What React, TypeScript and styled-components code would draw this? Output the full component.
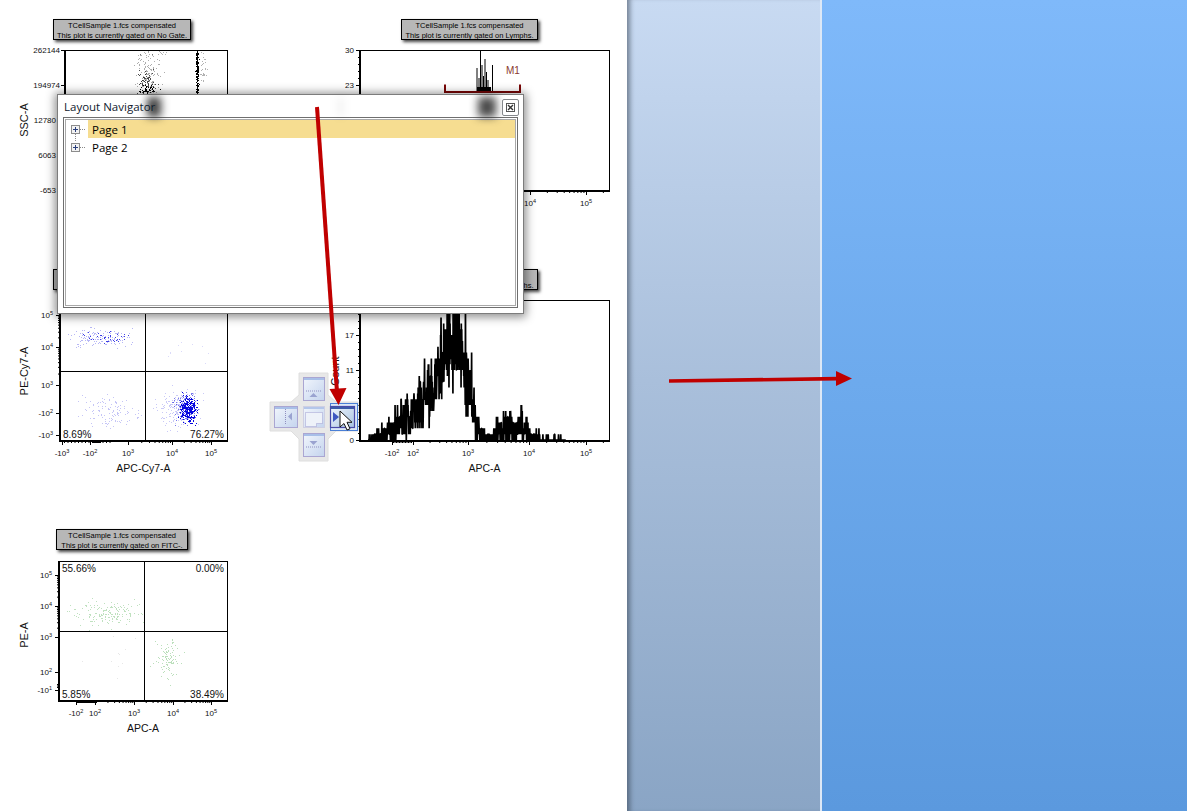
import React from "react";
import styled, { createGlobalStyle } from "styled-components";

const GlobalStyle = createGlobalStyle`
  html, body { margin: 0; padding: 0; background: #fff; }
  #root { width: 1187px; height: 811px; }
`;

const Page = styled.div`
  position: relative;
  display: flex;
  width: 1187px;
  height: 811px;
  overflow: hidden;
  font-family: "Liberation Sans", Arial, sans-serif;
`;
const Canvas = styled.main`
  position: relative;
  flex: 0 0 627px;
  background: #fff;
`;
const MidPanel = styled.aside`
  box-sizing: border-box;
  flex: 0 0 195px;
  background: linear-gradient(180deg, #c8daf2 0%, #a9bfdb 47%, #8aa5c5 100%);
  box-shadow: inset 6px 0 5px -3px rgba(50, 60, 75, 0.55);
  border-right: 2px solid #dde8f6;
`;
const RightPanel = styled.section`
  flex: 1;
  background: linear-gradient(180deg, #7fb9fa 0%, #6daaed 47%, #5b99de 100%);
`;
const PlotNode = styled.figure<{ $x: number; $y: number }>`
  position: absolute;
  left: ${(p) => p.$x}px;
  top: ${(p) => p.$y}px;
  margin: 0;
`;
const PlotTitle = styled.div<{ $offset: number; $w: number }>`
  box-sizing: border-box;
  width: ${(p) => p.$w}px;
  height: 21px;
  margin-left: ${(p) => p.$offset}px;
  margin-bottom: 1px;
  padding-top: 1px;
  background: #b7b7b7;
  border: 1px solid #000;
  box-shadow: 2px 2px 3px #444;
  color: #000;
  font-size: 7.5px;
  line-height: 9.5px;
  text-align: center;
  white-space: nowrap;
`;
const TitleLine = styled.div``;
const ChartSvg = styled.svg`
  display: block;
  overflow: visible;
  font-family: "Liberation Sans", Arial, sans-serif;
`;
const Dialog = styled.div`
  position: absolute;
  left: 57px;
  top: 94px;
  box-sizing: border-box;
  width: 467px;
  height: 220px;
  display: flex;
  flex-direction: column;
  padding: 0 5px 5px 5px;
  background: #fff;
  border: 1px solid #7c7c7c;
  box-shadow: 0 1px 9px 2px rgba(0, 0, 0, 0.45);
`;
const DialogHeader = styled.header`
  position: relative;
  flex: 0 0 22px;
  display: flex;
  align-items: center;
  justify-content: space-between;
`;
const DialogTitle = styled.h1`
  position: relative;
  margin: 0 0 0 1px;
  font: 400 11.5px "Open Sans", "Noto Sans", sans-serif;
  color: #10202e;
`;
const Smudge = styled.div<{ $x: number; $w: number; $shade: number }>`
  position: absolute;
  left: ${(p) => p.$x}px;
  top: 2px;
  width: ${(p) => p.$w}px;
  height: 20px;
  background: rgba(30, 30, 30, ${(p) => p.$shade});
  filter: blur(4px);
`;
const CloseButton = styled.button`
  position: relative;
  box-sizing: border-box;
  width: 17px;
  height: 17px;
  margin: 3px -1px 0 0;
  padding: 0;
  display: flex;
  align-items: center;
  justify-content: center;
  background: #fff;
  border: 1px solid #85888c;
  border-radius: 2px;
`;
const TreeFrame = styled.div`
  flex: 1;
  padding: 1px;
  border: 1px solid #6f6f6f;
`;
const TreeInner = styled.div`
  box-sizing: border-box;
  height: 100%;
  padding: 0 0 0 3px;
  border: 1px solid #a9a9a9;
`;
const TreeRow = styled.div`
  display: flex;
  align-items: center;
  height: 18px;
`;
const TreeLabel = styled.span<{ $selected?: boolean }>`
  flex: 1;
  align-self: stretch;
  display: flex;
  align-items: center;
  padding-left: 4px;
  background: ${(p) => (p.$selected ? "#f6dd91" : "transparent")};
  font: 400 11.5px "Open Sans", "Noto Sans", sans-serif;
  color: #000;
`;
const Overlay = styled.svg`
  position: absolute;
  left: 0;
  top: 0;
  pointer-events: none;
`;

function rng(seed: number) {
  let a = seed;
  return () => {
    a |= 0;
    a = (a + 0x6d2b79f5) | 0;
    let t = Math.imul(a ^ (a >>> 15), 1 | a);
    t = (t + Math.imul(t ^ (t >>> 7), 61 | t)) ^ t;
    return ((t ^ (t >>> 14)) >>> 0) / 4294967296;
  };
}
function cloud(seed: number, n: number, cx: number, cy: number, sx: number, sy: number, box?: number[]) {
  const r = rng(seed);
  let d = "";
  for (let i = 0; i < n; i++) {
    const g1 = Math.sqrt(-2 * Math.log(r() + 1e-6)) * Math.cos(6.283 * r());
    const g2 = Math.sqrt(-2 * Math.log(r() + 1e-6)) * Math.cos(6.283 * r());
    const x = Math.round(cx + g1 * sx);
    const y = Math.round(cy + g2 * sy);
    if (box && (x < box[0] || x > box[1] || y < box[2] || y > box[3])) continue;
    d += `M${x} ${y}h1v1h-1z`;
  }
  return d;
}
function minors(a: number, b: number) {
  const out: number[] = [];
  for (let k = 2; k <= 9; k++) out.push(a + (b - a) * Math.log10(k));
  return out;
}
function spread(a: number, b: number, step: number) {
  const out: number[] = [];
  for (let v = a; v <= b; v += step) out.push(v);
  return out;
}

type Layer = { d: string; color: string; opacity: number };
type TickLabel = { at: number; base: string; exp?: string; shift?: number };
type PlotSpec = {
  area: { x: number; titleTop: number; w: number; h: number };
  titleX: number;
  titleW: number;
  gate: string;
  frame: { l: number; r: number; t: number; b: number };
  yGap?: number;
  yLabels: TickLabel[];
  yMinor: number[];
  xLabels: TickLabel[];
  xMinor: number[];
  xName: string;
  yName: string;
  yNameX: number;
  yNameY: number;
  quad?: { x: number; y: number };
  pct?: { tl?: string; tr?: string; bl?: string; br?: string };
  layers: Layer[];
};

function Label({ x, y, base, exp, anchor }: { x: number; y: number; base: string; exp?: string; anchor: "end" | "middle" }) {
  return (
    <text x={x} y={y} fontSize={8} fill="#111" textAnchor={anchor}>
      {base}
      {exp && (
        <tspan dy={-3} fontSize={5.5}>
          {exp}
        </tspan>
      )}
    </text>
  );
}

function Chart({ s, children }: { s: PlotSpec; children?: React.ReactNode }) {
  const { frame: f, area: a } = s;
  return (
    <PlotNode $x={a.x} $y={a.titleTop}>
      <PlotTitle $offset={s.titleX - a.x} $w={s.titleW}>
        <TitleLine>TCellSample 1.fcs compensated</TitleLine>
        <TitleLine>This plot is currently gated on {s.gate}.</TitleLine>
      </PlotTitle>
      <ChartSvg width={a.w} height={a.h} viewBox={`${a.x} ${a.titleTop + 22} ${a.w} ${a.h}`}>
        <rect x={f.l + 0.5} y={f.t + 0.5} width={f.r - f.l} height={f.b - f.t} fill="#fff" stroke="#000" />
        {s.layers.map((l, i) => (
          <path key={i} d={l.d} fill={l.color} opacity={l.opacity} />
        ))}
        {children}
        {s.quad && (
          <path
            d={`M${s.quad.x + 0.5} ${f.t}V${f.b}M${f.l} ${s.quad.y + 0.5}H${f.r}`}
            stroke="#000"
            fill="none"
          />
        )}
        <path d={`M${f.l} ${f.t}V${f.b + 1}H${f.r + 1}`} stroke="#000" strokeWidth={2} fill="none" />
        {s.yMinor.map((v) => (
          <path key={v} d={`M${f.l - 2} ${v + 0.5}h2`} stroke="#000" />
        ))}
        {s.yLabels.map((t) => (
          <path key={t.at} d={`M${f.l - 4} ${t.at + 0.5}h4`} stroke="#000" />
        ))}
        {s.xMinor.map((v) => (
          <path key={v} d={`M${v + 0.5} ${f.b + 1}v2`} stroke="#000" />
        ))}
        {s.xLabels.map((t) => (
          <path key={t.at} d={`M${t.at + 0.5} ${f.b + 1}v4`} stroke="#000" />
        ))}
        {s.yLabels.map((t) => (
          <Label key={t.at} x={f.l - (s.yGap ?? 7) + (t.shift ?? 0)} y={t.at + 3} base={t.base} exp={t.exp} anchor="end" />
        ))}
        {s.xLabels.map((t) => (
          <Label key={t.at} x={t.at} y={f.b + 16} base={t.base} exp={t.exp} anchor="middle" />
        ))}
        {s.xName && (
          <text x={(f.l + f.r) / 2} y={f.b + 32} fontSize={10.5} fill="#111" textAnchor="middle">
            {s.xName}
          </text>
        )}
        {s.yName && (
          <text
            x={s.yNameX}
            y={s.yNameY}
            fontSize={11}
            fill="#111"
            textAnchor="middle"
            transform={`rotate(-90 ${s.yNameX} ${s.yNameY})`}
          >
            {s.yName}
          </text>
        )}
        {s.pct?.tl && <text x={f.l + 3} y={f.t + 11} fontSize={10} fill="#111">{s.pct.tl}</text>}
        {s.pct?.tr && <text x={f.r - 3} y={f.t + 11} fontSize={10} fill="#111" textAnchor="end">{s.pct.tr}</text>}
        {s.pct?.bl && <text x={f.l + 3} y={f.b - 2} fontSize={10} fill="#111">{s.pct.bl}</text>}
        {s.pct?.br && <text x={f.r - 3} y={f.b - 2} fontSize={10} fill="#111" textAnchor="end">{s.pct.br}</text>}
      </ChartSvg>
    </PlotNode>
  );
}

const envelope: [number, number][] = [
  [368, 440], [372, 437], [390, 432], [400, 424], [410, 417], [420, 406], [430, 392], [437, 382], [445, 352],
  [452, 336], [458, 336], [463, 356], [468, 384], [473, 412], [478, 430], [482, 436], [490, 438.5], [500, 432],
  [510, 428], [518, 426], [525, 431], [532, 437], [540, 439.4], [560, 439.7], [566, 440],
];
function envAt(x: number) {
  for (let i = 0; i < envelope.length - 1; i++) {
    const [a, ya] = envelope[i];
    const [b, yb] = envelope[i + 1];
    if (x >= a && x <= b) return ya + ((x - a) / (b - a)) * (yb - ya);
  }
  return 440;
}
function histogramPath() {
  const r = rng(77);
  const unit = 5.83;
  let d = "M368 440";
  for (let x = 368; x < 566; x += 0.22) {
    const mean = (440 - envAt(x)) / unit;
    const limit = Math.exp(-mean);
    let count = 0;
    let prod = r();
    while (prod > limit && count < 40) {
      count++;
      prod *= r();
    }
    d += `L${x.toFixed(2)} ${(440 - count * unit).toFixed(1)}`;
  }
  return d;
}
const histD = histogramPath();

const plotA: PlotSpec = {
  area: { x: 10, titleTop: 19, w: 225, h: 180 },
  titleX: 53,
  titleW: 138,
  gate: "No Gate",
  frame: { l: 65, r: 227, t: 50, b: 190 },
  yGap: 9,
  yLabels: [
    { at: 50, base: "262144", shift: 4 },
    { at: 85, base: "194974", shift: 4 },
    { at: 120, base: "12780" },
    { at: 155, base: "6063" },
    { at: 190, base: "-653" },
  ],
  yMinor: [],
  xLabels: [],
  xMinor: [],
  xName: "",
  yName: "SSC-A",
  yNameX: 28,
  yNameY: 120,
  layers: [
    { d: cloud(3, 190, 148, 76, 7, 16, [134, 168, 50, 92]), color: "#000", opacity: 0.32 },
    { d: cloud(4, 60, 146, 80, 5, 6, [134, 168, 50, 93]), color: "#000", opacity: 0.7 },
    { d: cloud(41, 60, 147, 90, 4, 2.5, [134, 168, 50, 93]), color: "#000", opacity: 1 },
    { d: cloud(5, 300, 197, 72, 0.6, 24, [195, 199, 50, 93]), color: "#000", opacity: 1 },
    { d: cloud(6, 34, 203, 66, 1.6, 10, [200, 208, 50, 93]), color: "#000", opacity: 0.3 },
    { d: cloud(7, 20, 153, 52, 10, 2, [130, 170, 50, 56]), color: "#000", opacity: 0.3 },
  ],
};

const plotTR: PlotSpec = {
  area: { x: 335, titleTop: 19, w: 285, h: 180 },
  titleX: 401,
  titleW: 137,
  gate: "Lymphs",
  frame: { l: 360, r: 609, t: 50, b: 190 },
  yGap: 6,
  yLabels: [
    { at: 50, base: "30" },
    { at: 85, base: "23" },
  ],
  yMinor: [57, 64, 71, 78],
  xLabels: [
    { at: 530, base: "10", exp: "4" },
    { at: 586, base: "10", exp: "5" },
  ],
  xMinor: [...minors(530, 586), ...minors(586, 642).filter((v) => v < 609)],
  xName: "",
  yName: "",
  yNameX: 0,
  yNameY: 0,
  layers: [],
};

const plotD: PlotSpec = {
  area: { x: 335, titleTop: 269, w: 285, h: 210 },
  titleX: 401,
  titleW: 137,
  gate: "Lymphs",
  frame: { l: 360, r: 609, t: 300, b: 440 },
  yGap: 6,
  yLabels: [
    { at: 335, base: "17" },
    { at: 370, base: "11" },
    { at: 440, base: "0" },
  ],
  yMinor: spread(307, 433, 7),
  xLabels: [
    { at: 392, base: "-10", exp: "2" },
    { at: 413, base: "10", exp: "2" },
    { at: 468, base: "10", exp: "3" },
    { at: 529, base: "10", exp: "4" },
    { at: 586, base: "10", exp: "5" },
  ],
  xMinor: [
    ...spread(393, 412, 1.5),
    ...minors(413, 468),
    ...minors(468, 529),
    ...minors(529, 586),
    ...minors(586, 642).filter((v) => v < 609),
  ],
  xName: "APC-A",
  yName: "Count",
  yNameX: 339,
  yNameY: 371,
  layers: [],
};

const plotB: PlotSpec = {
  area: { x: 10, titleTop: 269, w: 225, h: 210 },
  titleX: 53,
  titleW: 138,
  gate: "FITC-",
  frame: { l: 60, r: 227, t: 300, b: 440 },
  yLabels: [
    { at: 315, base: "10", exp: "5" },
    { at: 347, base: "10", exp: "4" },
    { at: 385, base: "10", exp: "3" },
    { at: 413, base: "-10", exp: "2" },
    { at: 435, base: "-10", exp: "3" },
  ],
  yMinor: [...minors(347, 315), ...minors(385, 347)],
  xLabels: [
    { at: 62, base: "-10", exp: "3" },
    { at: 90, base: "-10", exp: "2" },
    { at: 128, base: "10", exp: "3" },
    { at: 172, base: "10", exp: "4" },
    { at: 211, base: "10", exp: "5" },
  ],
  xMinor: [...spread(64, 110, 3.5), ...minors(128, 172), ...minors(172, 211), ...spread(92, 100, 1)],
  xName: "APC-Cy7-A",
  yName: "PE-Cy7-A",
  yNameX: 28,
  yNameY: 371,
  quad: { x: 145, y: 371 },
  pct: { bl: "8.69%", br: "76.27%" },
  layers: [
    { d: cloud(11, 140, 99, 337, 15, 4.5, [68, 132, 325, 352]), color: "#2020e0", opacity: 0.32 },
    { d: cloud(12, 40, 105, 337, 10, 2.5), color: "#1010e0", opacity: 0.8 },
    { d: cloud(13, 130, 104, 412, 18, 9, [78, 143, 392, 430]), color: "#3030e0", opacity: 0.28 },
    { d: cloud(14, 240, 180, 408, 11, 10, [150, 203, 382, 432]), color: "#3030e0", opacity: 0.26 },
    { d: cloud(15, 170, 186, 408, 6, 8, [172, 198, 392, 428]), color: "#2020e0", opacity: 0.6 },
    { d: cloud(17, 260, 188, 409, 4, 7, [176, 197, 392, 425]), color: "#0505e0", opacity: 1 },
    { d: cloud(16, 10, 185, 350, 12, 10, [148, 220, 330, 369]), color: "#3030e0", opacity: 0.18 },
  ],
};

const plotC: PlotSpec = {
  area: { x: 10, titleTop: 529, w: 225, h: 210 },
  titleX: 56,
  titleW: 132,
  gate: "FITC-",
  frame: { l: 59, r: 227, t: 561, b: 700 },
  yLabels: [
    { at: 575, base: "10", exp: "5" },
    { at: 606, base: "10", exp: "4" },
    { at: 637, base: "10", exp: "3" },
    { at: 672, base: "10", exp: "2" },
    { at: 690, base: "-10", exp: "1" },
  ],
  yMinor: [...minors(606, 575), ...minors(637, 606), ...spread(684, 688, 1.5)],
  xLabels: [
    { at: 76, base: "-10", exp: "2" },
    { at: 95, base: "10", exp: "2" },
    { at: 134, base: "10", exp: "3" },
    { at: 173, base: "10", exp: "4" },
    { at: 211, base: "10", exp: "5" },
  ],
  xMinor: [...spread(77, 96, 1), ...minors(96, 134), ...minors(134, 173), ...minors(173, 211)],
  xName: "APC-A",
  yName: "PE-A",
  yNameX: 28,
  yNameY: 635,
  quad: { x: 144, y: 631 },
  pct: { tl: "55.66%", tr: "0.00%", bl: "5.85%", br: "38.49%" },
  layers: [
    { d: cloud(21, 170, 108, 613, 18, 6.5, [62, 143, 590, 630]), color: "#2a9a2a", opacity: 0.3 },
    { d: cloud(22, 100, 167, 660, 5.5, 9, [150, 190, 637, 695]), color: "#2a9a2a", opacity: 0.32 },
    { d: cloud(23, 12, 110, 660, 20, 16, [70, 143, 633, 695]), color: "#555", opacity: 0.14 },
  ],
};

function TreeIcon({ last }: { last?: boolean }) {
  return (
    <svg width="19" height="18" viewBox="0 0 19 18" style={{ flex: "0 0 19px", overflow: "visible" }}>
      {!last && <path d="M6.5 14v7" stroke="#888" strokeDasharray="1 1" fill="none" />}
      <path d="M11 9.5h5" stroke="#888" strokeDasharray="1 1" fill="none" />
      <rect x="2.5" y="5.5" width="8" height="8" fill="#f2f2f2" stroke="#8c8c8c" />
      <path d="M4 9.5h5M6.5 7v5" stroke="#2a3f7c" fill="none" />
    </svg>
  );
}

function NavTile({ x, y, w, h, selected }: { x: number; y: number; w: number; h: number; selected?: boolean }) {
  return (
    <g>
      <rect
        x={x + 0.5}
        y={y + 0.5}
        width={w}
        height={h}
        fill={selected ? "url(#navSel)" : "url(#navTile)"}
        stroke={selected ? "#4a4aa8" : "#aaa6d2"}
        strokeWidth={selected ? 1.2 : 1}
      />
      <rect x={x + 1} y={y + 1} width={w - 1} height={2} fill={selected ? "#3a5aa8" : "#a8bfe8"} />
    </g>
  );
}

function App() {
  return (
    <Page>
      <GlobalStyle />
      <Canvas>
        <Chart s={plotA} />
        <Chart s={plotTR}>
          <path
            d="M477 91V68M479 91V78M480.5 91V50M482 91V65M483.5 91V76M485 91V59M486.5 91V72M488 91V80M492.5 91V65"
            stroke="#000"
            strokeWidth={1}
            fill="none"
          />
          <rect x={477} y={87} width={14} height={5} fill="#000" />
          <path d="M445 84.5V92H520V84.5" stroke="#7a0606" strokeWidth={2} fill="none" />
          <text x={506} y={74} fontSize={10} fill="#8a3a30">M1</text>
        </Chart>
        <Chart s={plotB} />
        <Chart s={plotD}>
          <path d={histD} stroke="#000" strokeWidth={1.7} strokeLinejoin="bevel" fill="none" />
        </Chart>
        <Chart s={plotC} />
        <Dialog>
          <DialogHeader>
            <Smudge $x={84} $w={14} $shade={0.85} />
            <Smudge $x={415} $w={18} $shade={0.8} />
            <Smudge $x={276} $w={3} $shade={0.12} />
            <DialogTitle>Layout Navigator</DialogTitle>
            <CloseButton aria-label="Close">
              <svg width="11" height="11" viewBox="0 0 11 11">
                <rect x="1.5" y="1.5" width="8" height="8" fill="#fff" stroke="#555" />
                <path d="M3 3l5 5M8 3l-5 5" stroke="#333" strokeWidth="1.4" />
              </svg>
            </CloseButton>
          </DialogHeader>
          <TreeFrame>
            <TreeInner>
              <TreeRow>
                <TreeIcon />
                <TreeLabel $selected>Page 1</TreeLabel>
              </TreeRow>
              <TreeRow>
                <TreeIcon last />
                <TreeLabel>Page 2</TreeLabel>
              </TreeRow>
            </TreeInner>
          </TreeFrame>
        </Dialog>
      </Canvas>
      <MidPanel />
      <RightPanel />
      <Overlay width={1187} height={811} viewBox="0 0 1187 811">
        <defs>
          <linearGradient id="navTile" x1="0" y1="0" x2="1" y2="1">
            <stop offset="0" stopColor="#f2f6fc" />
            <stop offset="1" stopColor="#c4d4ee" />
          </linearGradient>
          <linearGradient id="navSel" x1="0" y1="0" x2="1" y2="1">
            <stop offset="0" stopColor="#f2f6fc" />
            <stop offset="1" stopColor="#a8c4e2" />
          </linearGradient>
        </defs>
        <path
          d="M299 373H328V395L336 402H358V431H336L328 439V461H299V439L291 431H270V402H291L299 395Z"
          fill="#e8e8e8"
          stroke="#dedede"
        />
        <NavTile x={303} y={377} w={21} h={23} />
        <path d="M306 391h15" stroke="#8f8fc0" strokeDasharray="1 1" />
        <path d="M313.5 393l4 4h-8z" fill="#9aa3d0" />
        <NavTile x={274} y={406} w={23} h={21} />
        <path d="M285.5 409v16" stroke="#8f8fc0" strokeDasharray="1 1" />
        <path d="M288 416.5l4-4v8z" fill="#9aa3d0" />
        <rect x={303.5} y={406.5} width={21} height={21} fill="url(#navTile)" stroke="#cfcfe2" />
        <rect x={304} y={407} width={20} height={2} fill="#b4c6ea" />
        <path d="M305.5 412.5h17v11h-6v3h-11z" fill="#eef2f9" stroke="#a09fd0" strokeDasharray="1 1" />
        <NavTile x={303} y={433} w={21} h={23} />
        <path d="M306 447h15" stroke="#8f8fc0" strokeDasharray="1 1" />
        <path d="M313.5 445l-4-4h8z" fill="#9aa3d0" />
        <rect x={330.5} y={403.5} width={27} height={27} fill="#dbe7f7" stroke="#4a7fd6" />
        <NavTile x={330} y={406} w={24} h={21} selected />
        <path d="M333 412v10l6-5z" fill="#3f58c0" />
        <path
          d="M340 411v16l4-3.5 3 6.5 3-1.2-3-6.5h5z"
          fill="#fff"
          stroke="#111"
          strokeWidth={1}
          strokeLinejoin="round"
        />
        <path d="M317 107L337 392" stroke="#c00000" strokeWidth={4} fill="none" />
        <path d="M329.5 389L346.5 388L338.5 405Z" fill="#c00000" />
        <path d="M669 381L838 378.6" stroke="#c00000" strokeWidth={3.6} fill="none" />
        <path d="M836 371L852 378.6L836 386Z" fill="#c00000" />
      </Overlay>
    </Page>
  );
}

export default App;
